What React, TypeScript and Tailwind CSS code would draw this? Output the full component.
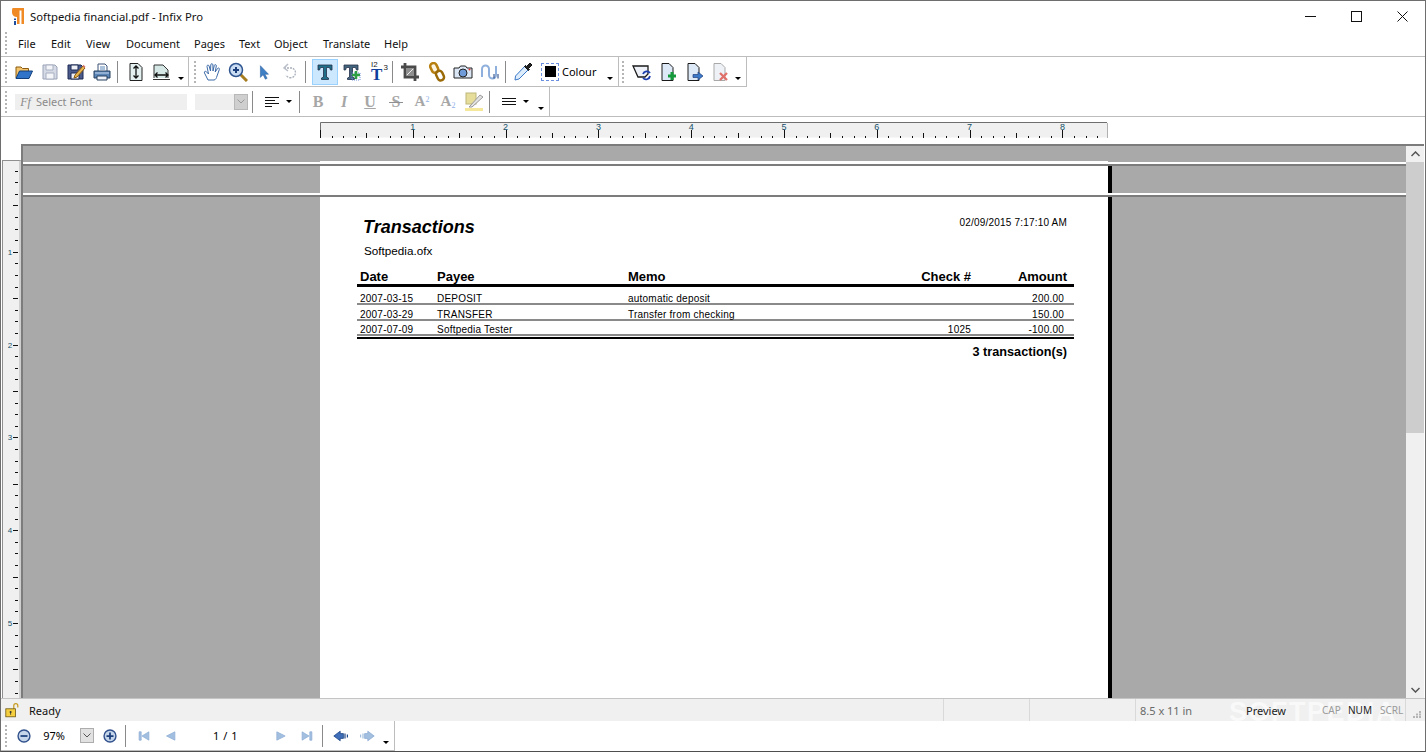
import React from 'react';

const uiFont = "font-['Noto_Sans',sans-serif]";
const docFont = "font-['Liberation_Sans',sans-serif]";

type SvgProps = { children: React.ReactNode; size?: number };

const Ico: React.FC<SvgProps> = ({ children, size = 20 }) => (
  <svg width={size} height={size} viewBox="0 0 20 20" fill="none" className="block shrink-0">
    {children}
  </svg>
);

const Grip = () => (
  <div className="w-[2px] h-[22px] shrink-0 border-l-2 border-dotted border-[#b5b5b5]" />
);

const Sep = () => <div className="w-px h-[22px] bg-[#8a8a8a] shrink-0" />;

const Caret = ({ className = '' }: { className?: string }) => (
  <div className={`w-0 h-0 border-x-[3px] border-t-[3px] border-x-transparent border-t-black shrink-0 ${className}`} />
);

const Btn: React.FC<{ children: React.ReactNode; active?: boolean; className?: string }> = ({ children, active, className = '' }) => (
  <div
    className={`w-[26px] h-[26px] shrink-0 flex items-center justify-center ${
      active ? 'bg-[#cce8ff] border border-[#99d1ff]' : ''
    } ${className}`}
  >
    {children}
  </div>
);

const Open = () => (
  <Ico>
    <path d="M2 16V5h5l1.500 1.500h6V9" fill="#f3c46b" stroke="#8a5a10" />
    <path d="M2 16.500 5.500 9h13L15 16.500Z" fill="#2f74c9" stroke="#123f7a" />
  </Ico>
);
const Save = () => (
  <Ico>
    <path d="M3 3h12l2 2v12H3Z" fill="#d5dae6" stroke="#9aa3b8" />
    <path d="M6 3h7v5H6ZM6 11h8v6H6Z" fill="#f4f5f8" stroke="#a8afc0" />
  </Ico>
);
const SaveAs = () => (
  <Ico>
    <path d="M2 3h13l2 2v12H2Z" fill="#4a5a8a" stroke="#1d2a55" />
    <path d="M5 3h7v5H5ZM5 11h8v6H5Z" fill="#eef0f6" stroke="#1d2a55" />
    <path d="m9 13 8-9 2 2-8 9-3 1Z" fill="#e8b650" stroke="#8a5a10" />
    <path d="m16.500 4 1-1.200 2 2-1 1.200Z" fill="#d8756a" />
  </Ico>
);
const Print = () => (
  <Ico>
    <path d="M6 2h7l2 2v6H6Z" fill="#fff" stroke="#3c5578" />
    <path d="M8 5h5M8 7h5" stroke="#5d86b8" />
    <path d="M2 9h16v7H2Z" fill="#5d86b8" stroke="#24405f" />
    <path d="M5 14h10v4H5Z" fill="#eef2f8" stroke="#24405f" />
    <path d="M3 11h14" stroke="#c5d8ee" />
  </Ico>
);
const FitHeight = () => (
  <Ico>
    <path d="M4 1.500h8l4 4v13H4Z" fill="#e3f0ef" stroke="#222" />
    <path d="M10 4v12M7.500 6.500 10 4l2.500 2.500M7.500 13.500 10 16l2.500-2.500" stroke="#111" strokeWidth="1.300" />
  </Ico>
);
const FitWidth = () => (
  <Ico>
    <path d="M2 16V3h9l5 5v8" fill="#d5e8e5" stroke="#333" />
    <path d="M1 17.500h17" stroke="#333" />
    <path d="M3 13h13M5.500 10.500 3 13l2.500 2.500M13.500 10.500 16 13l-2.500 2.500" stroke="#111" strokeWidth="1.300" />
  </Ico>
);
const Hand = () => (
  <Ico size={20}>
    <path
      d="M6 18 2.500 11c-.8-1.500 1-2.300 2-1.200L6.500 12 5 4.500c-.3-1.500 1.700-2 2.100-.5L8.500 9 8.800 2.800c0-1.500 2-1.500 2.100 0L11 9l1.300-5.500c.4-1.400 2.200-1 2 .5L13.200 10l2.300-3.500c.8-1.200 2.400-.2 1.800 1.100L15 14c-.5 2-1.500 4-3 4Z"
      fill="#fff"
      stroke="#3c6aa8"
    />
  </Ico>
);
const Zoom = () => (
  <Ico size={20}>
    <path d="m12 12 7 7" stroke="#a67c20" strokeWidth="3" />
    <circle cx="8" cy="8" r="6.500" fill="#c9dcf2" stroke="#2f5590" strokeWidth="1.500" />
    <path d="M5 8h6M8 5v6" stroke="#1c3f7c" strokeWidth="2" />
  </Ico>
);
const Arrow = () => (
  <Ico size={18}>
    <path d="M6 3v13l3-3 2.500 5 2-1-2.500-4.500h4Z" fill="#3f7fc4" stroke="#2d5f9c" strokeWidth=".6" />
  </Ico>
);
const Undo = () => (
  <Ico>
    <path d="M4 6h8a5 5 0 1 1-6 7" stroke="#a9b0bb" strokeWidth="1.300" strokeDasharray="2 1" />
    <path d="M8 2 4 6l4 3" stroke="#b8bec8" strokeWidth="1.500" />
  </Ico>
);
const BigT = ({ color = '#1f6f8a' }: { color?: string }) => (
  <path d="M3 3h14v5h-1.500l-1-2.500H11.500V15l2 1v1.500h-7V16l2-1V5.500H5.500l-1 2.500H3Z" fill={color} stroke="#23304a" strokeWidth=".8" />
);
const TextAdd = () => (
  <Ico>
    <BigT color="#43667e" />
    <rect x="11" y="11" width="8" height="7" stroke="#6a8fd8" strokeDasharray="1 1" />
    <path d="M15 9v8M11 13h8" stroke="#2ea043" strokeWidth="2.500" />
  </Ico>
);
const TextNum = () => (
  <div className="relative w-5 h-5">
    <span className={`absolute left-[3px] -top-[1px] text-[8px] leading-[8px] text-[#222] ${docFont}`}>I2</span>
    <span className={`absolute right-0 top-[2px] text-[8px] leading-[8px] text-[#222] ${docFont}`}>3</span>
    <span className="absolute left-[3px] top-[5px] text-[17px] leading-[15px] font-bold text-[#0f3f9c] font-['Liberation_Serif',serif]">T</span>
  </div>
);
const Crop = () => (
  <Ico>
    <path d="M5 1v14h14M1 5h14v14" stroke="#4a4a4a" strokeWidth="2.800" />
    <rect x="6" y="6" width="8" height="8" fill="#8f8f8f" />
    <path d="m7 13 6-6" stroke="#eee" />
  </Ico>
);
const Link = () => (
  <Ico>
    <rect x="4" y="1" width="6.500" height="10" rx="3.200" transform="rotate(-25 7 6)" stroke="#b77f10" strokeWidth="2.500" fill="#f7e7b8" fillOpacity=".4" />
    <rect x="9.500" y="8.500" width="6.500" height="10" rx="3.200" transform="rotate(-25 13 13)" stroke="#9a6a08" strokeWidth="2.500" />
  </Ico>
);
const Camera = () => (
  <Ico>
    <path d="M1 6h5l1.500-2h5L14 6h5v10H1Z" fill="#dbe6f4" stroke="#222" />
    <circle cx="10" cy="11" r="4" fill="#6f9bd8" stroke="#222" />
    <circle cx="16.500" cy="7.500" r="1" fill="#d33" />
  </Ico>
);
const Curve = () => (
  <Ico>
    <path d="M2 15V7a3.500 3.500 0 0 1 7 0v6a3.500 3.500 0 0 0 7 0V4" stroke="#8fb0dc" strokeWidth="2" />
    <path d="M14 12v4.500M18 12v4.500" stroke="#1c3f7c" />
  </Ico>
);
const Dropper = () => (
  <Ico>
    <path d="M13 3 2.500 14 2 18l4-1L16 7" fill="#dcecfb" stroke="#3c78c8" />
    <path d="m11.500 4.500 4 4 1-1-1-1L19 3l-2-2-3.500 3.500-1-1Z" fill="#222" stroke="#111" />
  </Ico>
);
const PageBase = ({ fill = '#dde9f7', stroke = '#1a1a1a' }: { fill?: string; stroke?: string }) => (
  <path d="M4 1.500h7l4 4v13H4Z" fill={fill} stroke={stroke} />
);
const Replace = () => (
  <Ico>
    <path d="M1 4h15v8l-3 3H6Z" fill="#eef2f8" stroke="#1a1a1a" strokeWidth="1.300" />
    <path d="M11 12a4 4 0 0 1 7-1M18 14a4 4 0 0 1-7 2" stroke="#1c3fb0" strokeWidth="1.800" />
  </Ico>
);
const PageAdd = () => (
  <Ico>
    <PageBase />
    <path d="M14 10v8M10 14h8" stroke="#159a3c" strokeWidth="3" />
  </Ico>
);
const PageOut = () => (
  <Ico>
    <PageBase />
    <path d="M9 12.500h5V10l5 4-5 4v-2.500H9Z" fill="#3c78c8" stroke="#1c3f7c" strokeWidth=".7" />
  </Ico>
);
const PageDel = () => (
  <Ico>
    <PageBase fill="#eef2f7" stroke="#a9a9a9" />
    <path d="m10 11 7 7M17 11l-7 7" stroke="#e0706a" strokeWidth="2.300" />
  </Ico>
);
const Highlight = () => (
  <Ico>
    <rect x="2" y="1" width="10" height="11" fill="#e6dd9b" stroke="#bdb77a" />
    <rect x="1" y="16" width="18" height="3" fill="#f6e89a" />
    <path d="m6 14 10-11 3 2-11 10H5Z" fill="#e3e3e3" stroke="#9a9a9a" />
  </Ico>
);
const ZoomRound = ({ plus }: { plus?: boolean }) => (
  <Ico size={14}>
    <circle cx="10" cy="10" r="8.500" fill="#c5d5ea" stroke="#32518c" strokeWidth="2" />
    <path d={plus ? 'M5 10h10M10 5v10' : 'M5 10h10'} stroke="#1c3f7c" strokeWidth="2.500" />
  </Ico>
);
const Nav = ({ d }: { d: string }) => (
  <Ico size={14}>
    <path d={d} fill="#a3bfe0" stroke="#8cacd4" />
  </Ico>
);
const Lock = () => (
  <Ico size={16}>
    <path d="M11 9V4.500a2.500 2.500 0 0 1 5 0V7" stroke="#c69a1c" strokeWidth="1.500" />
    <rect x="1" y="8.500" width="12" height="10" fill="#f5cf3f" stroke="#6b5510" />
    <circle cx="7" cy="12.500" r="1.300" fill="#333" />
    <path d="M7 13v3" stroke="#333" />
  </Ico>
);

const TopRuler = () => (
  <svg width="788" height="16" className="block">
    <rect x="0.5" y="0.5" width="787" height="15" fill="#f0f0f0" />
    <path d="M.5 16V.5H787" stroke="#6e6e6e" fill="none" />
    <path d="M787.500 1v15" stroke="#b0b0b0" />
    {Array.from({ length: 68 }, (_, i) => i).map((i) => {
      const x = Math.round(i * 11.6) + 0.5;
      const h = i % 8 === 0 ? 8 : i % 4 === 0 ? 5 : 2;
      return <line key={i} x1={x} x2={x} y1={16} y2={16 - h} stroke="#111" />;
    })}
    {[1, 2, 3, 4, 5, 6, 7, 8].map((n) => (
      <text key={n} x={n * 92.8} y={8} fontSize="9" textAnchor="middle" fill="#15506a" fontFamily="Liberation Sans">
        {n}
      </text>
    ))}
  </svg>
);

const SideRuler = () => (
  <svg width="15" height="540" className="block">
    {Array.from({ length: 47 }, (_, i) => i + 1).map((i) => {
      const y = Math.round(i * 11.6 - 2) + 0.5;
      const w = i % 8 === 0 ? 5 : i % 4 === 0 ? 5 : 3;
      return <line key={i} x1={15} x2={15 - w} y1={y} y2={y} stroke="#111" />;
    })}
    {[1, 2, 3, 4, 5].map((n) => (
      <text key={n} x={7} y={n * 92.8 + 1} fontSize="8" textAnchor="middle" fill="#15506a" fontFamily="Liberation Sans">
        {n}
      </text>
    ))}
  </svg>
);

const PageBand: React.FC<{ children?: React.ReactNode; className?: string; edge?: boolean }> = ({ children, className = '', edge = true }) => (
  <div className={`flex bg-[#a9a9a9] ${className}`}>
    <div className="w-[297px] shrink-0" />
    <div className="w-[788px] shrink-0 bg-white relative">{children}</div>
    {edge && <div className="w-1 shrink-0 bg-black" />}
  </div>
);

const PageLine = () => (
  <div className="shrink-0">
    <div className="h-[2px] bg-white" />
    <div className="h-[2px] bg-[#7c7c7c]" />
  </div>
);

const rows = [
  { date: '2007-03-15', payee: 'DEPOSIT', memo: 'automatic deposit', check: '', amount: '200.00' },
  { date: '2007-03-29', payee: 'TRANSFER', memo: 'Transfer from checking', check: '', amount: '150.00' },
  { date: '2007-07-09', payee: 'Softpedia Tester', memo: '', check: '1025', amount: '-100.00' },
];

const Report = () => (
  <div className={`pl-[37px] pr-[34px] text-black ${docFont}`}>
    <div className="flex justify-between items-start pt-[19px] pl-[6px] pr-[7px]">
      <div className="text-[18px] leading-[22px] font-bold italic">Transactions</div>
      <div className="text-[10px] leading-[12px] pt-[1px] tracking-[.2px]">02/09/2015 7:17:10 AM</div>
    </div>
    <div className="text-[11.700px] leading-[14px] pl-[7px] pt-[6px]">Softpedia.ofx</div>
    <div className="flex text-[13px] leading-[15px] font-bold pt-[11px] border-b-[3px] border-black">
      <div className="w-[80px] pl-[3px]">Date</div>
      <div className="w-[191px]">Payee</div>
      <div className="w-[250px]">Memo</div>
      <div className="w-[93px] text-right">Check #</div>
      <div className="w-[96px] text-right">Amount</div>
    </div>
    <div className="pt-[2.500px] text-[10px] leading-[8px] tracking-[.22px]">
      {rows.map((r) => (
        <div key={r.date} className="flex items-end h-[15.500px] border-b-2 border-[#8a8a8a]">
          <div className="w-[80px] pl-[3px]">{r.date}</div>
          <div className="w-[191px]">{r.payee}</div>
          <div className="w-[250px]">{r.memo}</div>
          <div className="w-[93px] text-right">{r.check}</div>
          <div className="w-[93px] text-right">{r.amount}</div>
        </div>
      ))}
    </div>
    <div className="h-[2px] mt-[1px] bg-black" />
    <div className="text-[12.700px] leading-[15px] font-bold text-right pr-[7px] pt-[5.500px]">3 transaction(s)</div>
  </div>
);

const menus = [
  { label: 'File', width: 'w-[33px]' },
  { label: 'Edit', width: 'w-[35px]' },
  { label: 'View', width: 'w-[40px]' },
  { label: 'Document', width: 'w-[68px]' },
  { label: 'Pages', width: 'w-[45px]' },
  { label: 'Text', width: 'w-[35px]' },
  { label: 'Object', width: 'w-[49px]' },
  { label: 'Translate', width: 'w-[61px]' },
  { label: 'Help', width: 'w-[40px]' },
];

const formatGlyph = "font-bold font-['Liberation_Serif',serif]";

export default function App() {
  return (
    <div className={`w-[1426px] h-[752px] overflow-hidden bg-white flex flex-col border border-[#6e6e6e] border-b-[#4e4e4e] text-[11px] text-black ${uiFont}`}>
      {/* title bar */}
      <div className="h-[30px] shrink-0 flex items-center pl-[9px]">
        <svg width="16" height="19" viewBox="0 0 16 19" className="block shrink-0">
          <path d="M3 1h11v16h-2.500V3.500H9.500V17H7V10C4 10 2 8 2 5.500S2 1 3 1Z" fill="#f08a24" />
          <path d="M4 11.500h2v1.500H4ZM4 14h2v4H4Z" fill="#1f4f9c" />
        </svg>
        <div className="ml-[4px] pt-[1px] text-[11.300px] leading-none text-[#111]">Softpedia financial.pdf - Infix Pro</div>
        <div className="ml-auto flex h-full">
          {['min', 'max', 'close'].map((k) => (
            <div key={k} className="w-[46px] h-full flex items-center justify-center">
              <svg width="11" height="11" viewBox="0 0 11 11" fill="none" stroke="#111">
                {k === 'min' && <path d="M0 5.500h11" />}
                {k === 'max' && <rect x=".5" y=".5" width="10" height="10" />}
                {k === 'close' && <path d="m.5.5 10 10M10.500.5l-10 10" />}
              </svg>
            </div>
          ))}
        </div>
      </div>

      {/* menu bar */}
      <div className="h-[26px] shrink-0 flex items-center pl-[4px] pb-[1px] border-b border-[#bdbdbd]">
        <Grip />
        <div className="flex pl-[11px] text-[#111]">
          {menus.map((m) => (
            <span key={m.label} className={`text-[11px] leading-none ${m.width}`}>{m.label}</span>
          ))}
        </div>
      </div>

      {/* main toolbar */}
      <div className="h-[30px] shrink-0 flex">
        <div className="flex items-center pl-[4px] h-full w-[618px] shrink-0 border-b border-r border-[#bdbdbd]">
          <Grip />
          <div className="w-[4px]" />
          <Btn><Open /></Btn><Btn><Save /></Btn><Btn><SaveAs /></Btn><Btn><Print /></Btn>
          <div className="w-[2px]" /><Sep /><div className="w-[5px]" />
          <Btn><FitHeight /></Btn><Btn><FitWidth /></Btn>
          <Caret className="mt-[13px] ml-[3px]" />
          <div className="w-[4px]" /><div className="w-px h-full bg-[#bdbdbd]" />
          <div className="w-[5px]" /><Grip />
          <div className="w-[3px]" />
          <Btn><Hand /></Btn><Btn><Zoom /></Btn><Btn><Arrow /></Btn><Btn><Undo /></Btn>
          <div className="w-[2px]" /><Sep /><div className="w-[6px]" />
          <Btn active><Ico><BigT /></Ico></Btn><Btn><TextAdd /></Btn>
          <div className="w-[1px]" />
          <Btn><TextNum /></Btn>
          <div className="w-[1px]" /><Sep /><div className="w-[4px]" />
          <Btn><Crop /></Btn>
          <div className="w-[1px]" />
          <Btn><Link /></Btn><Btn><Camera /></Btn>
          <div className="w-[1px]" />
          <Btn><Curve /></Btn>
          <div className="w-[2px]" /><Sep /><div className="w-[4px]" />
          <Btn><Dropper /></Btn>
          <div className="ml-[5px] w-[18px] h-[18px] border border-dashed border-[#6d8fe0] flex items-center justify-center shrink-0">
            <div className="w-[11px] h-[11px] bg-black" />
          </div>
          <span className="ml-[3px] text-[11px] leading-none">Colour</span>
          <Caret className="mt-[13px] ml-[11px]" />
        </div>
        <div className="flex items-center pl-[3px] h-full w-[128px] shrink-0 border-b border-r border-[#bdbdbd]">
          <Grip />
          <div className="w-[5px]" />
          <Btn><Replace /></Btn><Btn><PageAdd /></Btn><Btn><PageOut /></Btn><Btn><PageDel /></Btn>
          <Caret className="mt-[13px] ml-[2px]" />
        </div>
      </div>

      {/* format toolbar */}
      <div className="h-[30px] shrink-0 flex border-b border-[#bdbdbd]">
        <div className="flex items-center pl-[4px] h-full w-[549px] shrink-0 border-r border-[#bdbdbd]">
          <Grip />
          <div className="ml-[8px] w-[172px] h-[16px] bg-[#efefef] flex items-center text-[#8a8a8a]">
            <span className="w-[21px] text-center text-[12px] font-['Liberation_Serif',serif] italic leading-none">Ff</span>
            <span className="text-[11px] leading-none">Select Font</span>
          </div>
          <div className="ml-[8px] w-[53px] h-[16px] bg-[#efefef] flex justify-end">
            <div className="w-[14px] h-full bg-[#cfcfcf] border border-[#b8b8b8] flex items-center justify-center">
              <svg width="8" height="5" viewBox="0 0 8 5" fill="none" stroke="#9a9a9a"><path d="m.5.5 3.500 3.500L7.500.5" /></svg>
            </div>
          </div>
          <div className="w-[4px]" /><Sep />
          <div className="w-[12px]" />
          <svg width="14" height="10" stroke="#111"><path d="M0 .5h14M0 3.500h10M0 6.500h14M0 9.500h7" /></svg>
          <Caret className="ml-[7px]" />
          <div className="w-[7px]" /><Sep /><div className="w-[5px]" />
          <Btn className="text-[#a6a6a6] leading-none"><span className={`${formatGlyph} text-[16px]`}>B</span></Btn>
          <Btn className="text-[#a6a6a6] leading-none"><span className={`${formatGlyph} italic text-[16px]`}>I</span></Btn>
          <Btn className="text-[#a6a6a6] leading-none"><span className={`${formatGlyph} underline text-[16px]`}>U</span></Btn>
          <Btn className="text-[#a6a6a6] leading-none">
            <span className={`${formatGlyph} relative text-[16px]`}>
              S
              <span className="absolute -left-[3px] -right-[3px] top-[8px] h-px bg-[#8f8f8f]" />
            </span>
          </Btn>
          <Btn className="text-[#a6a6a6] leading-none">
            <span className={`${formatGlyph} text-[15px]`}>A<sup className="text-[8px] text-[#8fb0e8] font-normal">2</sup></span>
          </Btn>
          <Btn className="text-[#a6a6a6] leading-none">
            <span className={`${formatGlyph} text-[15px]`}>A<sub className="text-[8px] text-[#8fb0e8] font-normal">2</sub></span>
          </Btn>
          <Btn><Highlight /></Btn>
          <div className="w-[2px]" /><Sep />
          <div className="w-[12px]" />
          <svg width="14" height="8" stroke="#111"><path d="M0 .5h14M0 3.500h14M0 6.500h14" /></svg>
          <Caret className="ml-[7px]" />
          <Caret className="ml-[9px] mt-[13px]" />
        </div>
      </div>

      {/* ruler row */}
      <div className="h-[27px] shrink-0 flex items-end pl-[319px] pb-[6px]">
        <TopRuler />
      </div>

      {/* document area */}
      <div className="flex-1 min-h-0 flex">
        <div className="w-[20px] shrink-0 pt-[16px] pl-[1px]">
          <div className="h-full w-[16px] bg-[#f0f0f0] border-l border-t border-[#8f8f8f] border-r-[3px] border-r-[#cfcfcf] box-content overflow-hidden">
            <SideRuler />
          </div>
        </div>
        <div className="w-[1385px] shrink-0 flex flex-col bg-[#a9a9a9] border-t-2 border-l-2 border-[#7c7c7c] min-h-0">
          <div className="h-[15px] shrink-0 bg-[#a9a9a9]" />
          <PageBand className="h-px shrink-0" edge={false} />
          <PageLine />
          <PageBand className="h-[27px] shrink-0" />
          <PageLine />
          <PageBand className="flex-1 min-h-0"><Report /></PageBand>
        </div>
        <div className="w-[18px] shrink-0 flex flex-col bg-[#f0f0f0] border-t-2 border-[#7c7c7c] mr-px">
          <div className="h-[16px] flex items-center justify-center">
            <svg width="9" height="6" viewBox="0 0 9 6" fill="none" stroke="#555" strokeWidth="1.500"><path d="m.5 5 4-4 4 4" /></svg>
          </div>
          <div className="h-[271px] bg-[#cdcdcd]" />
          <div className="flex-1" />
          <div className="h-[16px] flex items-center justify-center">
            <svg width="9" height="6" viewBox="0 0 9 6" fill="none" stroke="#555" strokeWidth="1.500"><path d="m.5 1 4 4 4-4" /></svg>
          </div>
        </div>
      </div>

      {/* status bar, the watermark lies under its texts */}
      <div className="h-[23px] shrink-0 bg-[#f0f0f0] border-t border-[#c4c4c4] flex items-center text-[11px] leading-none relative">
        <div className={`absolute left-[1228px] -top-[2px] text-[27px] leading-[30px] font-bold tracking-[1.5px] text-white opacity-60 pointer-events-none ${docFont}`}>
          SOFTPEDIA
        </div>
        <div className="w-[942px] shrink-0 h-full flex items-center relative">
          <div className="w-[28px] pl-[4px]"><Lock /></div>
          <span className="text-[#111]">Ready</span>
        </div>
        <div className="w-[86px] shrink-0 h-full border-l border-[#d9d9d9]" />
        <div className="w-[106px] shrink-0 h-full border-l border-[#d9d9d9]" />
        <div className="w-[106px] shrink-0 h-full border-l border-[#d9d9d9] flex items-center pl-[4px] text-[#6a6a6a] relative">8.5 x 11 in</div>
        <div className="w-[79px] shrink-0 h-full flex items-center pl-[5px] text-[#222] relative">Preview</div>
        <div className="w-[26px] shrink-0 pl-[2px] text-[#9a9a9a] text-[10px] relative">CAP</div>
        <div className="w-[33px] shrink-0 pl-[2px] text-[#222] text-[10px] relative">NUM</div>
        <div className="w-[27px] shrink-0 pl-[1px] text-[#9a9a9a] text-[10px] h-full flex items-center border-r border-[#d9d9d9] relative">SCRL</div>
        <svg width="9" height="7" className="ml-[7px] mt-[9px] shrink-0" fill="#b5b5b5">
          <path d="M6 0h2v2H6ZM3 2.500h2v2H3ZM6 2.500h2v2H6ZM0 5h2v2H0ZM3 5h2v2H3ZM6 5h2v2H6Z" />
        </svg>
      </div>

      {/* navigation toolbar */}
      <div className="h-[30px] shrink-0 flex">
        <div className="flex items-center pl-[4px] w-[394px] h-full shrink-0 border-r border-b border-[#bdbdbd]">
          <Grip />
          <div className="ml-[10px]"><ZoomRound /></div>
          <span className="w-[46px] text-center text-[11px] leading-none">97%</span>
          <div className="ml-[3px] w-[14px] h-[15px] bg-[#e1e1e1] border border-[#adadad] flex items-center justify-center">
            <svg width="8" height="5" viewBox="0 0 8 5" fill="none" stroke="#555"><path d="m.5.5 3.500 3.500L7.500.5" /></svg>
          </div>
          <div className="ml-[9px]"><ZoomRound plus /></div>
          <div className="w-[8px]" /><Sep /><div className="w-[11px]" />
          <Nav d="M3 4h3v12H3ZM17 4v12L7 10Z" />
          <div className="w-[12px]" />
          <Nav d="M17 4v12L5 10Z" />
          <span className="w-[97px] text-center text-[11px] leading-none tracking-[.5px]">1 / 1</span>
          <Nav d="M4 4v12l12-6Z" />
          <div className="w-[12px]" />
          <Nav d="M3 4v12l10-6ZM14 4h3v12h-3Z" />
          <div className="w-[8px]" /><Sep /><div className="w-[10px]" />
          <Ico size={16}><path d="M1 10 9 4v3h4v6H9v3Z" fill="#3e6fb8" stroke="#1e4586" /><path d="M15 7v6M18 8v4" stroke="#1e4586" strokeWidth="1.500" /></Ico>
          <div className="w-[10px]" />
          <Ico size={16}><path d="M19 10 11 4v3H7v6h4v3Z" fill="#a3bfe0" stroke="#8cacd4" /><path d="M5 7v6M2 8v4" stroke="#a3bfe0" strokeWidth="1.500" /></Ico>
          <Caret className="ml-[8px] mt-[14px]" />
        </div>
      </div>
    </div>
  );
}
